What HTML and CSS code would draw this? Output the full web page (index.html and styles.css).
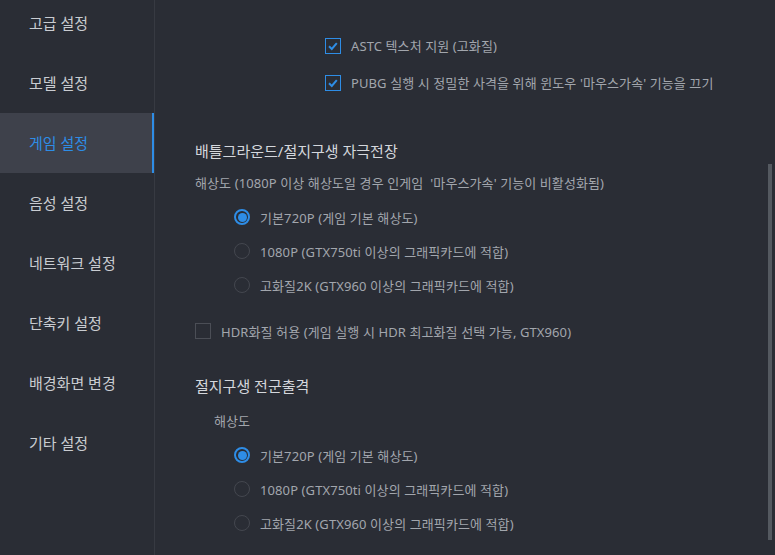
FILE: index.html
```html
<!DOCTYPE html>
<html lang="ko">
<head>
<meta charset="utf-8">
<title>설정</title>
<link rel="stylesheet" href="styles.css">
</head>
<body>
<div class="app">
  <nav class="sidebar">
    <div class="nav-list">
      <div class="nav-item">고급 설정</div>
      <div class="nav-item">모델 설정</div>
      <div class="nav-item active">게임 설정</div>
      <div class="nav-item">음성 설정</div>
      <div class="nav-item">네트워크 설정</div>
      <div class="nav-item">단축키 설정</div>
      <div class="nav-item">배경화면 변경</div>
      <div class="nav-item">기타 설정</div>
    </div>
  </nav>
  <main class="content">
    <div class="check-row indent-top">
      <span class="checkbox checked"><svg viewBox="0 0 16 16" width="16" height="16"><path d="M4 8.3 L6.8 11 L11.8 5.2" fill="none" stroke="#2e8de6" stroke-width="2"/></svg></span>
      <span class="label">ASTC 텍스처 지원 (고화질)</span>
    </div>
    <div class="check-row indent-top">
      <span class="checkbox checked"><svg viewBox="0 0 16 16" width="16" height="16"><path d="M4 8.3 L6.8 11 L11.8 5.2" fill="none" stroke="#2e8de6" stroke-width="2"/></svg></span>
      <span class="label">PUBG 실행 시 정밀한 사격을 위해 윈도우 '마우스가속' 기능을 끄기</span>
    </div>

    <h2 class="section-title first">배틀그라운드/절지구생 자극전장</h2>
    <div class="sub">해상도 (1080P 이상 해상도일 경우 인게임 &nbsp;'마우스가속' 기능이 비활성화됨)</div>
    <div class="radio-group">
      <div class="radio-row"><span class="radio checked"></span><span class="label">기본720P (게임 기본 해상도)</span></div>
      <div class="radio-row"><span class="radio"></span><span class="label">1080P (GTX750ti 이상의 그래픽카드에 적합)</span></div>
      <div class="radio-row"><span class="radio"></span><span class="label">고화질2K (GTX960 이상의 그래픽카드에 적합)</span></div>
    </div>
    <div class="check-row hdr">
      <span class="checkbox"></span>
      <span class="label">HDR화질 허용 (게임 실행 시 HDR 최고화질 선택 가능, GTX960)</span>
    </div>

    <h2 class="section-title second">절지구생 전군출격</h2>
    <div class="sub sub-indent">해상도</div>
    <div class="radio-group">
      <div class="radio-row"><span class="radio checked"></span><span class="label">기본720P (게임 기본 해상도)</span></div>
      <div class="radio-row"><span class="radio"></span><span class="label">1080P (GTX750ti 이상의 그래픽카드에 적합)</span></div>
      <div class="radio-row"><span class="radio"></span><span class="label">고화질2K (GTX960 이상의 그래픽카드에 적합)</span></div>
    </div>
    <div class="scrollbar"></div>
  </main>
</div>
</body>
</html>
```
FILE: styles.css
```css
* { box-sizing: border-box; }
html, body {
  margin: 0;
  padding: 0;
  width: 775px;
  height: 555px;
  overflow: hidden;
  background: #2a2d35;
  font-family: "Noto Sans", "Noto Sans CJK KR", sans-serif;
}
.app {
  display: flex;
  height: 555px;
}
.sidebar {
  width: 155px;
  flex: none;
  background: #2a2d35;
  border-right: 1px solid #373a42;
  overflow: hidden;
}
.nav-list {
  margin-top: -7px;
}
.nav-item {
  position: relative;
  height: 60px;
  display: flex;
  align-items: center;
  padding-left: 29px;
  padding-bottom: 2px;
  font-size: 15px;
  color: #c9ccd1;
}
.nav-item.active {
  background: #3e414b;
  color: #2e8de6;
}
.nav-item.active::after {
  content: "";
  position: absolute;
  right: -1px;
  top: 0;
  bottom: 0;
  width: 3px;
  background: #2e8de6;
}
.content {
  position: relative;
  flex: 1;
  padding-top: 27px;
  padding-left: 40px;
}
.check-row {
  display: flex;
  align-items: center;
  height: 37px;
}
.indent-top {
  padding-left: 130px;
}
.checkbox {
  width: 16px;
  height: 16px;
  flex: none;
  border: 1px solid #4b4e56;
  display: flex;
  align-items: center;
  justify-content: center;
}
.checkbox.checked {
  border: 1.5px solid #2e8de6;
}
.checkbox svg { display: block; flex: none; }
.label {
  font-size: 13px;
  letter-spacing: 0.1px;
  color: #a2a6ad;
  margin-left: 10px;
  white-space: nowrap;
}
.section-title {
  margin: 0;
  height: 24px;
  line-height: 24px;
  font-size: 15px;
  font-weight: normal;
  color: #d4d7dc;
}
.section-title.first { margin-top: 38px; }
.section-title.second { margin-top: 28px; }
.sub {
  height: 20px;
  line-height: 20px;
  font-size: 13px;
  letter-spacing: 0.1px;
  color: #a2a6ad;
  margin-top: 10px;
  white-space: nowrap;
}
.second + .sub { margin-top: 13px; }
.sub-indent { padding-left: 19px; }
.radio-group {
  margin-top: 7px;
  padding-left: 39px;
}
.radio-row {
  display: flex;
  align-items: center;
  height: 34px;
}
.radio {
  width: 16px;
  height: 16px;
  flex: none;
  border-radius: 50%;
  border: 1.5px solid #44474f;
}
.radio.checked {
  border: 2px solid #2e8de6;
  padding: 1.5px;
  background: #2e8de6;
  background-clip: content-box;
}
.radio-row .label { margin-left: 10px; }
.hdr {
  margin-top: 14px;
  height: 30px;
}
.scrollbar {
  position: absolute;
  left: 613px;
  top: 164px;
  width: 4px;
  height: 376px;
  background: #545960;
}
```
